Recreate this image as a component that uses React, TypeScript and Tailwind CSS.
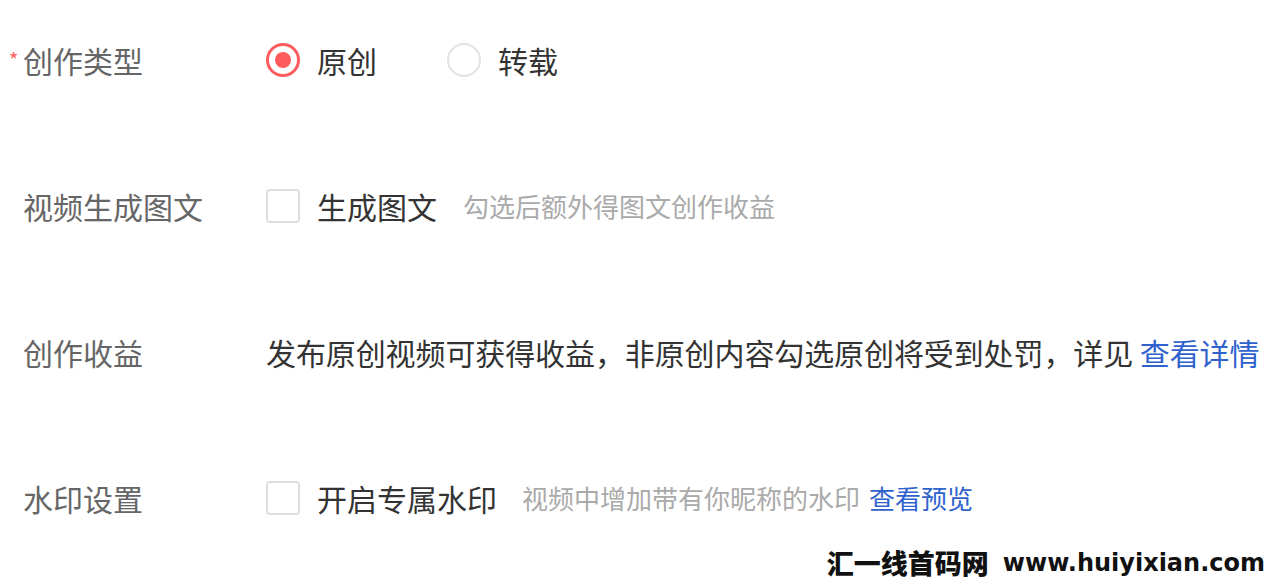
import React from 'react'

const font = { fontFamily: '"Microsoft YaHei", "Noto Sans CJK SC", "Noto Sans", sans-serif' }

function Radio({ checked, label }: { checked?: boolean; label: string }) {
  return (
    <label className="flex items-center">
      {checked ? (
        <span className="flex h-[34px] w-[34px] items-center justify-center rounded-full border-[3px] border-[#fe5c5c] bg-white">
          <span className="h-[16px] w-[16px] rounded-full bg-[#fe5c5c]" />
        </span>
      ) : (
        <span className="h-[34px] w-[34px] rounded-full border-2 border-[#e3e3e3] bg-white" />
      )}
      <span className="ml-[17px] text-[30px] leading-none text-[#333]">{label}</span>
    </label>
  )
}

function Checkbox({ label }: { label: string }) {
  return (
    <label className="flex items-center">
      <span className="h-[34px] w-[34px] rounded-[4px] border-2 border-[#dedede] bg-white" />
      <span className="ml-[17px] text-[30px] leading-none text-[#333]">{label}</span>
    </label>
  )
}

function Row({ label, required, children }: { label: string; required?: boolean; children: React.ReactNode }) {
  return (
    <div className="flex h-[40px] items-center">
      <div className="flex w-[266px] items-center pl-[9px]">
        <span className="w-[14px] text-[20px] leading-none text-[#fe5c5c]">{required ? '*' : ''}</span>
        <span className="text-[30px] leading-none text-[#666]">{label}</span>
      </div>
      <div className="flex items-center">{children}</div>
    </div>
  )
}

export default function App() {
  return (
    <div className="relative h-[583px] w-[1269px] overflow-hidden bg-white" style={font}>
      <div className="flex flex-col gap-[106px] pt-[40px]">
        <Row label="创作类型" required>
          <Radio checked label="原创" />
          <div className="ml-[70px]">
            <Radio label="转载" />
          </div>
        </Row>

        <Row label="视频生成图文">
          <Checkbox label="生成图文" />
          <span className="ml-[26px] text-[26px] leading-none text-[#aaa]">勾选后额外得图文创作收益</span>
        </Row>

        <Row label="创作收益">
          <span className="text-[30px] leading-none tracking-[-0.1px] text-[#333]">
            发布原创视频可获得收益，非原创内容勾选原创将受到处罚，详见 <a className="text-[#2f62cc]">查看详情</a>
          </span>
        </Row>

        <Row label="水印设置">
          <Checkbox label="开启专属水印" />
          <span className="ml-[25px] text-[26px] leading-none text-[#aaa]">视频中增加带有你昵称的水印</span>
          <a className="ml-[9px] text-[26px] leading-none text-[#2f62cc]">查看预览</a>
        </Row>
      </div>

      {/* site watermark */}
      <div className="absolute bottom-[7px] right-[4px] flex items-center gap-[14px] text-[#111]">
        <span className="text-[27px] font-black leading-none">汇一线首码网</span>
        <span className="text-[24px] font-bold leading-none" style={{ fontFamily: '"DejaVu Sans", sans-serif' }}>
          www.huiyixian.com
        </span>
      </div>
    </div>
  )
}
